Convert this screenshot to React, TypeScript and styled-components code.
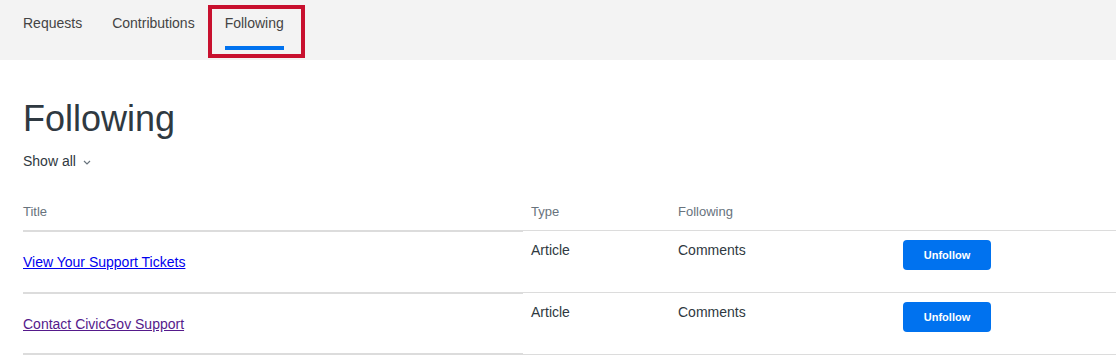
import styled, { createGlobalStyle } from 'styled-components'

const GlobalStyle = createGlobalStyle`
  html, body {
    margin: 0;
    padding: 0;
    background: #fff;
    overflow: hidden;
  }
  body {
    font-family: "Liberation Sans", Arial, sans-serif;
    color: #2f3941;
  }
`

const COLUMNS = '500px 147px 225px 1fr'

const rows = [
  { title: 'View Your Support Tickets', visited: false, type: 'Article', following: 'Comments' },
  { title: 'Contact CivicGov Support', visited: true, type: 'Article', following: 'Comments' },
]

const Chevron = () => (
  <svg width="8" height="5" viewBox="0 0 8 5" fill="none">
    <polyline points="1,1 4,4 7,1" stroke="#68737d" strokeWidth="1.2" />
  </svg>
)

const App = () => {
  return <Page>
    <GlobalStyle/>
    <NavBar>
      <Tab>Requests</Tab>
      <Tab>Contributions</Tab>
      <Highlight>
        <Tab $active>Following</Tab>
        <Underline/>
      </Highlight>
    </NavBar>
    <Main>
      <Heading>Following</Heading>
      <Filter>
        Show all <Chevron/>
      </Filter>
      <Table>
        <HeadCell>Title</HeadCell>
        <HeadCell $pad>Type</HeadCell>
        <HeadCell $pad>Following</HeadCell>
        <HeadCell $pad></HeadCell>
        {rows.map(row => <>
          <TitleCell key={row.title}>
            <Link href="#" $visited={row.visited}>{row.title}</Link>
          </TitleCell>
          <Cell>{row.type}</Cell>
          <Cell>{row.following}</Cell>
          <Cell>
            <Button>Unfollow</Button>
          </Cell>
        </>)}
      </Table>
    </Main>
  </Page>
}

const Page = styled.div`
  width: 100%;
`
const NavBar = styled.nav`
  height: 60px;
  background-color: #f3f3f3;
  display: flex;
  align-items: flex-start;
  padding-left: 23px;
  box-sizing: border-box;
`
const Tab = styled.div<{ $active?: boolean }>`
  font-size: 14px;
  line-height: 16px;
  color: #444;
  padding-top: ${p => (p.$active ? '0' : '15px')};
  margin-right: ${p => (p.$active ? '0' : '30px')};
  white-space: nowrap;
`
// red annotation box round the current tab
const Highlight = styled.div`
  margin-top: 5px;
  margin-left: -17px;
  border: 4px solid #c8102e;
  padding: 6px 17px 4px 13px;
  display: flex;
  flex-direction: column;
  align-items: flex-start;
`
const Underline = styled.div`
  margin-top: 15px;
  width: 59px;
  height: 4px;
  background-color: #0072ef;
`
const Main = styled.main`
  padding-left: 23px;
`
const Heading = styled.h1`
  margin: 37px 0 0;
  font-size: 36px;
  line-height: 43px;
  font-weight: 400;
  color: #2f3941;
`
const Filter = styled.div`
  margin-top: 11px;
  font-size: 14px;
  line-height: 20px;
  display: flex;
  align-items: center;
  gap: 7px;
  color: #2f3941;
  svg {
    margin-top: 2px;
  }
`
const Table = styled.div`
  display: grid;
  grid-template-columns: ${COLUMNS};
`
const HeadCell = styled.div<{ $pad?: boolean }>`
  font-size: 13px;
  line-height: 20px;
  color: #68737d;
  padding: 31px 0 8px ${p => (p.$pad ? '8px' : '0')};
`
const TitleCell = styled.div`
  height: 62px;
  box-sizing: border-box;
  border-top: 2px solid #dcdcdc;
  display: flex;
  align-items: center;
  &:nth-last-child(4) {
    border-bottom: 2px solid #dcdcdc;
    height: 63px;
  }
`
const Cell = styled.div`
  height: 62px;
  box-sizing: border-box;
  border-top: 1px solid #dcdcdc;
  padding: 9px 0 0 8px;
  font-size: 14px;
  line-height: 20px;
  color: #2f3941;
  &:nth-last-child(-n+3) {
    border-bottom: 1px solid #dcdcdc;
    height: 63px;
  }
`
const Link = styled.a<{ $visited?: boolean }>`
  font-size: 14px;
  line-height: 20px;
  color: ${p => (p.$visited ? '#551a8b' : '#0000ee')};
  text-decoration: underline;
`
const Button = styled.button`
  width: 88px;
  height: 30px;
  border: none;
  border-radius: 4px;
  background-color: #0072ef;
  color: white;
  font-family: "Liberation Sans", Arial, sans-serif;
  font-size: 11px;
  font-weight: 700;
  cursor: pointer;
`

export default App
